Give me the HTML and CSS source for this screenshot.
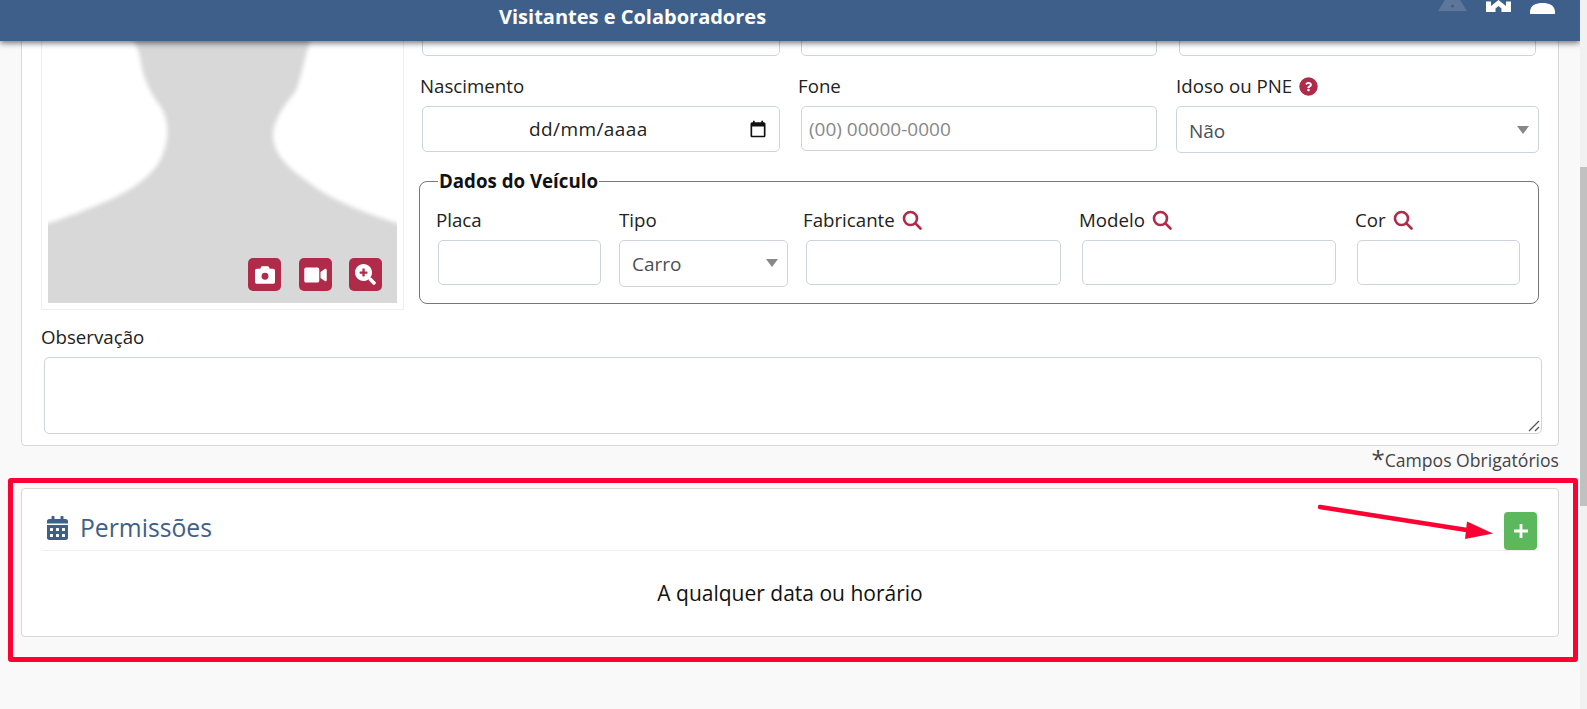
FILE: index.html
```html
<!DOCTYPE html>
<html lang="pt-BR">
<head>
<meta charset="utf-8">
<title>Visitantes e Colaboradores</title>
<link rel="stylesheet" href="styles.css">
</head>
<body>
<div class="app">
  <div class="page">
    <header class="topbar">
      <div class="topbar-title">Visitantes e Colaboradores</div>
      <div class="topbar-icons">
        <svg class="ti ti-warn" viewBox="0 0 29 11"><path d="M7 0H22L29 11H0Z" fill="#5c7799"/><circle cx="14.500" cy="6" r="1.500" fill="#3e5f8a"/></svg>
        <svg class="ti ti-home" viewBox="0 0 25 12"><path d="M0 1.500H5V6L12.500 0 20 6V1.500H25V12H15.500V8.500L12.500 6 9.500 8.500V12H0Z" fill="#fff"/></svg>
        <svg class="ti ti-user" viewBox="0 0 25 14"><path d="M0 14V11C1 5 6 3 12.500 3S24 5 25 11V14Z" fill="#fff"/></svg>
      </div>
    </header>

    <section class="card card-form">
      <div class="form-main">
        <div class="photo">
          <svg class="silhouette" viewBox="0 0 349 303" preserveAspectRatio="none">
            <defs><filter id="soft"><feGaussianBlur stdDeviation="2"/></filter></defs>
            <path filter="url(#soft)" fill="#d8d8d8" d="M60 0C72 20 90 40 92 57C95 75 100 90 112 105C122 120 122 140 112 160C100 182 70 197 44 207C25 215 10 220 -6 225V310H355V225C330 217 300 207 275 192C255 178 225 160 225 135C225 118 240 100 248 90C255 70 258 50 265 30L275 0Z"/>
          </svg>
          <div class="photo-actions">
            <button class="photo-btn" type="button" aria-label="Foto"><svg class="pi pi-cam" viewBox="0 0 512 512"><path fill="#fff" d="M512 144v288c0 26.500-21.500 48-48 48H48c-26.500 0-48-21.500-48-48V144c0-26.500 21.500-48 48-48h88l12.300-32.900c7-18.700 24.900-31.100 44.900-31.100h125.500c20 0 37.900 12.400 44.900 31.100L376 96h88c26.500 0 48 21.500 48 48z"/><circle cx="256" cy="288" r="88" fill="#b02a4a"/></svg></button>
            <button class="photo-btn" type="button" aria-label="Vídeo"><svg class="pi pi-vid" viewBox="0 0 576 512"><path fill="#fff" d="M336.200 64H47.800C21.400 64 0 85.400 0 111.800v288.400C0 426.600 21.400 448 47.800 448h288.400c26.400 0 47.800-21.400 47.800-47.800V111.800c0-26.400-21.400-47.800-47.800-47.800zm189.400 37.700L416 177.300v157.400l109.600 75.500c21.200 14.600 50.400-.3 50.400-25.800V127.500c0-25.400-29.100-40.400-50.400-25.800z"/></svg></button>
            <button class="photo-btn" type="button" aria-label="Ampliar"><svg class="pi pi-zoom" viewBox="0 0 512 512"><path fill="#fff" d="M505 442.700L405.300 343c-4.500-4.500-10.600-7-17-7H372c27.600-35.300 44-79.700 44-128C416 93.100 322.900 0 208 0S0 93.100 0 208s93.100 208 208 208c48.300 0 92.700-16.400 128-44v16.300c0 6.400 2.500 12.500 7 17l99.700 99.700c9.400 9.400 24.600 9.400 33.900 0l28.300-28.300c9.400-9.400 9.400-24.600.1-34z"/><path fill="#b02a4a" d="M304 192v32c0 6.600-5.400 12-12 12h-56v56c0 6.600-5.400 12-12 12h-32c-6.600 0-12-5.400-12-12v-56h-56c-6.600 0-12-5.400-12-12v-32c0-6.600 5.400-12 12-12h56v-56c0-6.600 5.400-12 12-12h32c6.600 0 12 5.400 12 12v56h56c6.600 0 12 5.400 12 12z"/></svg></button>
          </div>
        </div>

        <div class="fields">
          <div class="grid-three">
            <div class="field"><input class="control w-a" type="text" aria-label="Nome"></div>
            <div class="field"><input class="control w-b" type="text" aria-label="Documento"></div>
            <div class="field"><input class="control w-c" type="text" aria-label="E-mail"></div>
          </div>
          <div class="grid-three row-two">
            <div class="field">
              <label class="label label-first">Nascimento</label>
              <div class="control w-a date-control">
                <span class="date-text">dd/mm/aaaa</span>
                <svg class="date-icon" viewBox="0 0 24 24"><path d="M19 4h-1V2h-2v2H8V2H6v2H5C3.900 4 3 4.900 3 6v14c0 1.100.9 2 2 2h14c1.100 0 2-.9 2-2V6c0-1.100-.9-2-2-2zm0 16H5V9h14v11z" fill="#111"/></svg>
              </div>
            </div>
            <div class="field">
              <label class="label">Fone</label>
              <input class="control w-b" type="text" placeholder="(00) 00000-0000">
            </div>
            <div class="field">
              <label class="label">Idoso ou PNE
                <svg class="help" viewBox="0 0 512 512"><circle cx="256" cy="256" r="248" fill="#b02a4a"/><path fill="#fff" d="M262.655 90c-54.497 0-89.255 22.957-116.549 63.758-3.536 5.286-2.353 12.415 2.715 16.258l34.699 26.310c5.205 3.947 12.621 3.008 16.665-2.122 17.864-22.658 30.113-35.797 57.303-35.797 20.429 0 45.698 13.148 45.698 32.958 0 14.976-12.363 22.667-32.534 33.976C247.128 238.528 216 254.941 216 296v4c0 6.627 5.373 12 12 12h56c6.627 0 12-5.373 12-12v-1.333c0-28.462 83.186-29.647 83.186-106.667 0-58.002-60.165-102-116.531-102zM256 338c-25.365 0-46 20.635-46 46 0 25.364 20.635 46 46 46s46-20.636 46-46c0-25.365-20.635-46-46-46z" transform="translate(64 64) scale(.75)"/></svg>
              </label>
              <div class="select select-pne"><span>Não</span><i class="caret"></i></div>
            </div>
          </div>

          <fieldset class="vehicle">
            <legend class="vehicle-legend">Dados do Veículo</legend>
            <div class="vehicle-grid">
              <div class="field">
                <label class="label">Placa</label>
                <input class="control v-placa" type="text">
              </div>
              <div class="field">
                <label class="label">Tipo</label>
                <div class="select select-tipo"><span>Carro</span><i class="caret"></i></div>
              </div>
              <div class="field">
                <label class="label">Fabricante <svg class="lupa" viewBox="0 0 20 20"><path d="M8.500 2a6.500 6.500 0 1 0 0 13 6.500 6.500 0 0 0 0-13zM13.200 13.200L18.500 18.500" fill="none" stroke="#b02a4a" stroke-width="2.600" stroke-linecap="round"/></svg></label>
                <input class="control v-fab" type="text">
              </div>
              <div class="field">
                <label class="label">Modelo <svg class="lupa" viewBox="0 0 20 20"><path d="M8.500 2a6.500 6.500 0 1 0 0 13 6.500 6.500 0 0 0 0-13zM13.200 13.200L18.500 18.500" fill="none" stroke="#b02a4a" stroke-width="2.600" stroke-linecap="round"/></svg></label>
                <input class="control v-mod" type="text">
              </div>
              <div class="field">
                <label class="label">Cor <svg class="lupa" viewBox="0 0 20 20"><path d="M8.500 2a6.500 6.500 0 1 0 0 13 6.500 6.500 0 0 0 0-13zM13.200 13.200L18.500 18.500" fill="none" stroke="#b02a4a" stroke-width="2.600" stroke-linecap="round"/></svg></label>
                <input class="control v-cor" type="text">
              </div>
            </div>
          </fieldset>
        </div>
      </div>

      <div class="obs">
        <label class="label">Observação</label>
        <div class="obs-box">
          <textarea class="obs-text" aria-label="Observação"></textarea>
          <svg class="obs-grip" viewBox="0 0 12 12"><path d="M1 11L11 1M7 11L11 7" stroke="#555" stroke-width="1.300" fill="none"/></svg>
        </div>
      </div>
    </section>

    <div class="required"><span class="star">*</span>Campos Obrigatórios</div>

    <section class="card card-perm">
      <div class="perm-head">
        <svg class="perm-cal" viewBox="0 0 448 512"><path fill="#3e5f8a" d="M0 464c0 26.500 21.500 48 48 48h352c26.500 0 48-21.500 48-48V192H0v272zm320-196c0-6.600 5.400-12 12-12h40c6.600 0 12 5.400 12 12v40c0 6.600-5.400 12-12 12h-40c-6.600 0-12-5.400-12-12v-40zm0 128c0-6.600 5.400-12 12-12h40c6.600 0 12 5.400 12 12v40c0 6.600-5.400 12-12 12h-40c-6.600 0-12-5.400-12-12v-40zM192 268c0-6.600 5.400-12 12-12h40c6.600 0 12 5.400 12 12v40c0 6.600-5.400 12-12 12h-40c-6.600 0-12-5.400-12-12v-40zm0 128c0-6.600 5.400-12 12-12h40c6.600 0 12 5.400 12 12v40c0 6.600-5.400 12-12 12h-40c-6.600 0-12-5.400-12-12v-40zM64 268c0-6.600 5.400-12 12-12h40c6.600 0 12 5.400 12 12v40c0 6.600-5.400 12-12 12H76c-6.600 0-12-5.400-12-12v-40zm0 128c0-6.600 5.400-12 12-12h40c6.600 0 12 5.400 12 12v40c0 6.600-5.400 12-12 12H76c-6.600 0-12-5.400-12-12v-40zM400 64h-48V16c0-8.800-7.200-16-16-16h-32c-8.800 0-16 7.200-16 16v48H160V16c0-8.800-7.200-16-16-16h-32c-8.800 0-16 7.200-16 16v48H48C21.500 64 0 85.500 0 112v48h448v-48c0-26.500-21.500-48-48-48z"/></svg>
        <h2 class="perm-title">Permissões</h2>
        <button class="add-btn" type="button" aria-label="Adicionar"><svg viewBox="0 0 16 16"><path d="M8 1V15M1 8H15" stroke="#fff" stroke-width="2.800"/></svg></button>
      </div>
      <p class="perm-empty">A qualquer data ou horário</p>
    </section>

    <div class="callout"></div>
    <svg class="callout-arrow" viewBox="0 0 200 50"><path d="M2 3L155 27" stroke="#ff0033" stroke-width="4.500" stroke-linecap="round" fill="none"/><path d="M175 29.500L149 17.500L147 35Z" fill="#ff0033"/></svg>
  </div>
  <aside class="scrollbar"><div class="scrollbar-thumb"></div></aside>
</div>
</body>
</html>
```
FILE: styles.css
```css
* { box-sizing: border-box; }
html, body { margin: 0; height: 100%; overflow: hidden; }
body { font-family: "Open Sans", "Liberation Sans", sans-serif; font-size: 18.700px; color: #212529; background: #f9f9f9; }
.app { display: flex; height: 709px; }
.page { flex: 1; position: relative; padding: 0 21px; background: #f9f9f9; overflow: hidden; }
.scrollbar { width: 7px; background: #f1f1f1; padding-top: 167px; }
.scrollbar-thumb { height: 339px; background: #c1c1c1; }

.topbar { position: absolute; top: 0; left: 0; right: 0; height: 41px; background: #3e5f8a; box-shadow: 0 2px 6px rgba(0,0,0,.55); z-index: 5; display: flex; justify-content: space-between; padding: 0 25px 0 499px; }
.topbar-title { color: #fff; font-weight: 700; font-size: 20px; line-height: 34px; }
.topbar-icons { display: flex; align-items: flex-start; gap: 19px; }
.ti { display: block; }
.ti-warn { width: 29px; height: 11px; }
.ti-home { width: 25px; height: 12px; }
.ti-user { width: 25px; height: 14px; }

.card { background: #fff; border: 1px solid #d8d8d8; border-radius: 4px; }
.card-form { height: 446px; padding: 0 19px; }
.form-main { display: flex; gap: 15px; }
.photo { position: relative; width: 363px; height: 309px; padding: 0 6px 6px; border: 1px solid #eee; border-top: 0; flex: none; }
.silhouette { display: block; width: 349px; height: 302px; }
.photo-actions { position: absolute; right: 21px; bottom: 18px; display: flex; gap: 17.500px; }
.photo-btn { width: 33px; height: 33px; padding: 0; border: 0; border-radius: 5px; background: #b02a4a; display: flex; align-items: center; justify-content: center; }
.pi-cam { width: 20px; height: 20px; }
.pi-vid { width: 23px; height: 20px; }
.pi-zoom { width: 21px; height: 21px; }

.fields { width: 1120px; flex: none; padding-top: 10px; }
.grid-three { display: grid; grid-template-columns: 379px 378px 1fr; }
.row-two { margin-top: 20px; }
.field { display: flex; flex-direction: column; align-items: flex-start; }
.label { display: flex; align-items: center; gap: 6px; height: 20px; line-height: 20px; font-size: 18.700px; color: #222; white-space: nowrap; }
.label-first { margin-left: 1px; }
.control { display: block; height: 45px; padding: 0 7px; margin-top: 10px; background: #fff; border: 1px solid #ced4da; border-radius: 5px; font: inherit; font-size: 19px; color: #495057; outline: 0; }
.grid-three:first-child .control { margin-top: 0; }
.control::placeholder { color: #888; opacity: 1; }
.w-a { width: 358px; margin-left: 3px; }
.w-b { width: 356px; margin-left: 3px; }
.w-c { width: 357px; margin-left: 3px; }
.grid-three .date-control { height: 46px; }
.date-control { display: flex; align-items: center; justify-content: space-between; padding: 0 11px 0 106px; color: #222; }
.date-text { letter-spacing: .4px; }
.date-icon { width: 20px; height: 20px; flex: none; }
.help { width: 19px; height: 19px; flex: none; margin-left: 1px; }
.select { position: relative; display: flex; align-items: center; margin-top: 10px; background: #fff; border: 1px solid #ced4da; border-radius: 5px; color: #495057; font-size: 19px; }
.select span { position: relative; top: 1px; }
.select-pne { width: 363px; height: 47px; padding-left: 12px; }
.select-tipo { width: 169px; height: 47px; padding-left: 12px; }
.caret { position: absolute; top: 50%; right: 9px; margin-top: -4px; border-left: 6px solid transparent; border-right: 6px solid transparent; border-top: 8px solid #888; }

.vehicle { width: 1120px; height: 133px; margin: 18px 0 0; padding: 0 16px; border: 1px solid #777; border-radius: 8px; min-width: 0; }
.vehicle-legend { margin-left: 2px; padding: 0 1px; font-weight: 700; font-size: 18.700px; line-height: 20px; color: #111; }
.vehicle-grid { display: grid; grid-template-columns: 183px 184px 276px 276px 1fr; padding-top: 18.500px; }
.vehicle-grid .control { margin-top: 10px; }
.vehicle-grid .label { gap: 7px; }
.v-placa { width: 163px; margin-left: 2px; }
.v-fab { width: 255px; margin-left: 3px; }
.v-mod { width: 254px; margin-left: 3px; }
.v-cor { width: 163px; margin-left: 2px; }
.lupa { width: 20px; height: 20px; flex: none; }

.obs { margin-top: 17px; }
.obs-box { position: relative; margin: 10px 0 0 3px; width: 1498px; }
.obs-text { display: block; width: 1498px; height: 77px; background: #fff; border: 1px solid #ced4da; border-radius: 5px; outline: 0; resize: none; }
.obs-grip { position: absolute; right: 2px; bottom: 2px; width: 12px; height: 12px; }

.required { height: 42px; padding-top: 1px; text-align: right; font-size: 17.600px; line-height: 27px; color: #444; }
.star { font-size: 24px; vertical-align: -1px; line-height: 1; }

.card-perm { height: 149px; padding: 0 20px; }
.perm-head { display: flex; align-items: flex-start; height: 62px; border-bottom: 1px solid #eee; padding: 0 1px 0 5px; }
.perm-cal { width: 21px; height: 24px; margin-top: 27px; flex: none; }
.perm-title { flex: 1; margin: 23px 0 0 12px; font-size: 24.700px; line-height: 32px; font-weight: 400; color: #3e5f8a; }
.add-btn { width: 33px; height: 38px; margin-top: 23px; padding: 0; background: #5cb85c; border: 0; border-radius: 4px; display: flex; align-items: center; justify-content: center; }
.add-btn svg { width: 16px; height: 16px; }
.perm-empty { margin: 29px 0 0; text-align: center; font-size: 21px; line-height: 26px; color: #111; }

.callout { position: absolute; left: 8px; top: 478px; width: 1570px; height: 184px; border: 5px solid #ff0033; border-radius: 3px; pointer-events: none; }
.callout-arrow { position: absolute; left: 1318px; top: 504px; width: 200px; height: 50px; }
```
